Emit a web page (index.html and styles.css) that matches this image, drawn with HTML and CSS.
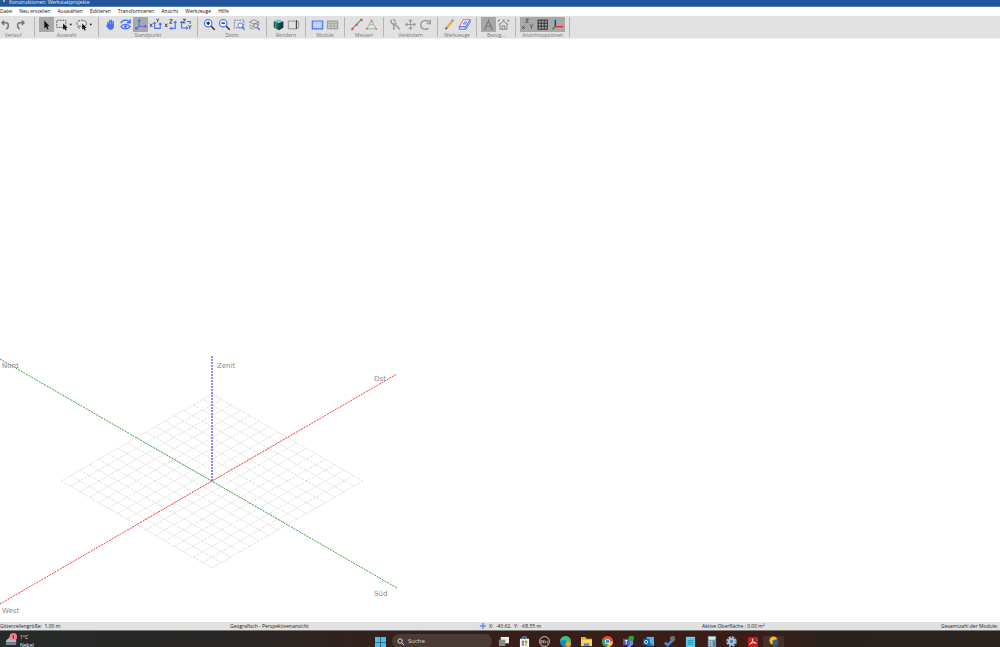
FILE: index.html
```
<!DOCTYPE html>
<html lang="de">
<head>
    <meta charset="UTF-8">
    <meta name="viewport" content="width=device-width, initial-scale=1.0">
    <title>Konstruktionen: Werkstattprojekte</title>
    <link rel="stylesheet" href="styles.css">
</head>
<body>
    <header class="titlebar">
        <span class="app-icon"></span>
        <span>Konstruktionen: Werkstattprojekte</span>
    </header>

    <nav class="menu">
        <a href="#">Datei</a>
        <a href="#">Neu erstellen</a>
        <a href="#">Auswählen</a>
        <a href="#">Editieren</a>
        <a href="#">Transformieren</a>
        <a href="#">Ansicht</a>
        <a href="#">Werkzeuge</a>
        <a href="#">Hilfe</a>
    </nav>

    <!-- Toolbar -->
    <div class="toolbar">
        <div class="group first">
            <div class="tools">
                <button aria-label="Rückgängig"><svg viewBox="0 0 15 15"><path d="M6 3 3.500 5.500 6 8M4 5.500H8C11.500 5.500 12 10 8.500 13" stroke="#777" stroke-width="1.800"/></svg></button>
                <button aria-label="Wiederholen"><svg viewBox="0 0 15 15"><path d="M9 3 11.500 5.500 9 8M11 5.500H7C3.500 5.500 3 10 6.500 13" stroke="#777" stroke-width="1.800"/></svg></button>
            </div>
            <span class="label">Verlauf</span>
        </div>
        <div class="group">
            <div class="tools">
                <button class="active" aria-label="Auswahl"><svg viewBox="0 0 15 15"><path d="M5 3V12L7 10.200 8.500 13.300 9.900 12.600 8.500 9.600H11Z" fill="#111"/></svg></button>
                <button class="wide" aria-label="Rechteckauswahl"><svg viewBox="0 0 20 15"><path d="M2 2.500H12V10.500H2Z" stroke="#555" stroke-dasharray="2 1"/><path d="M9 6V13L10.500 11.700 11.500 14 13 13.300 12 11H14Z" fill="#111"/><path d="M16 6.500H19L17.500 8.500Z" fill="#222"/></svg></button>
                <button class="wide" aria-label="Lassoauswahl"><svg viewBox="0 0 20 15"><ellipse cx="7.500" cy="6" rx="5.500" ry="3.500" stroke="#555" stroke-dasharray="3 1"/><path d="M3 9 5 12" stroke="#555"/><path d="M8 6V13L9.500 11.700 10.500 14 12 13.300 11 11H13Z" fill="#111"/><path d="M16 6.500H19L17.500 8.500Z" fill="#222"/></svg></button>
            </div>
            <span class="label">Auswahl</span>
        </div>
        <div class="group">
            <div class="tools">
                <button aria-label="Verschieben der Ansicht"><svg viewBox="0 0 15 15"><path d="M4.500 8V5M6.500 7V3M8.500 7V2.500M10.500 8V4" stroke="#4770f5" stroke-width="1.600" stroke-linecap="round"/><path d="M3.700 7H11.300V11L9.500 13.500H6L2.500 9.500Z" fill="#4770f5"/></svg></button>
                <button aria-label="Drehen der Ansicht"><svg viewBox="0 0 15 15"><path d="M2 6C4 1.500 10 1.500 12.500 5M13 1.500V5.500H9" stroke="#4770f5" stroke-width="1.500"/><path d="M2 10C5 6.500 10 6.500 13 10C10 13.500 5 13.500 2 10" stroke="#4770f5" stroke-width="1.500"/><circle cx="7.500" cy="10" r="1.600" fill="#4770f5"/></svg></button>
                <button class="active" aria-label="Perspektive"><svg viewBox="0 0 15 15"><path d="M6 2V9L2 12.500M6 9.500H14M4.500 3.500 6 2 7.500 3.500M12.500 8 14 9.500 12.500 11M2 10.500V12.500H4.500" stroke="#4770f5" stroke-width="1.300"/></svg></button>
                <button aria-label="XY-Ansicht"><svg viewBox="0 0 15 15"><path d="M6.500 5V12H13V6M5 6.500 6.500 5 8 6.500M11.500 7.500 13 6 14.500 7.500" stroke="#4770f5" stroke-width="1.300"/><path d="M1 6.500 4 10.500M4 6.500 1 10.500M8.500 1 10 3 11.500 1M10 3V5" stroke="#333"/></svg></button>
                <button aria-label="XZ-Ansicht"><svg viewBox="0 0 15 15"><path d="M7 12H13V4M11.500 5.500 13 4 14.500 5.500M8.500 10.500 7 12 8.500 13.500" stroke="#4770f5" stroke-width="1.300"/><path d="M1 6.500 4 10.500M4 6.500 1 10.500M6.500 2H9.500L6.500 6H9.500" stroke="#333"/></svg></button>
                <button aria-label="ZY-Ansicht"><svg viewBox="0 0 15 15"><path d="M3 4V11.500H10M1.500 5.500 3 4 4.500 5.500M8.500 10 10 11.500 8.500 13M9 4H13V7" stroke="#4770f5" stroke-width="1.300"/><path d="M4.500 1.500H7.500L4.500 5.500H7.500M11 8.500 12.500 10.500 14 8.500M12.500 10.500V13" stroke="#333"/></svg></button>
            </div>
            <span class="label">Standpunkt</span>
        </div>
        <div class="group">
            <div class="tools">
                <button aria-label="Vergrößern"><svg viewBox="0 0 15 15"><circle cx="6" cy="6" r="4.300" stroke="#4770f5" fill="#edf1ff" stroke-width="1.300"/><path d="M4 6H8M6 4V8M9.500 9.500 13.500 13.500" stroke="#222" stroke-width="1.500"/></svg></button>
                <button aria-label="Verkleinern"><svg viewBox="0 0 15 15"><circle cx="6" cy="6" r="4.300" stroke="#4770f5" fill="#edf1ff" stroke-width="1.300"/><path d="M4 6H8M9.500 9.500 13.500 13.500" stroke="#222" stroke-width="1.500"/></svg></button>
                <button aria-label="Bereich zoomen"><svg viewBox="0 0 15 15"><path d="M1.500 2.500H12.500V11.500H1.500Z" stroke="#777" stroke-dasharray="2 1"/><circle cx="8.500" cy="8.500" r="2.800" stroke="#4770f5" fill="#edf1ff"/><path d="M10.500 10.500 13.500 13.500" stroke="#4770f5" stroke-width="1.500"/></svg></button>
                <button aria-label="Objekt zoomen"><svg viewBox="0 0 15 15"><path d="M1.500 4.500 7 2 12.500 4.500V8M1.500 4.500 7 7 12.500 4.500M1.500 8 6 10M1.500 11 6 13" stroke="#888"/><circle cx="9" cy="9" r="2.500" stroke="#666" fill="#e1e1e1"/><path d="M11 11 13.500 13.500" stroke="#4770f5" stroke-width="1.500"/></svg></button>
            </div>
            <span class="label">Zoom</span>
        </div>
        <div class="group">
            <div class="tools">
                <button aria-label="Schattiert"><svg viewBox="0 0 15 15"><path d="M2 4 7 2 13 4V11L8 14 2 11Z" fill="#175d58"/><path d="M2 4 7 2 13 4 8 6Z" fill="#79c9b9"/><path d="M8 6 13 4V11L8 14Z" fill="#163c3d"/><path d="M4.500 5.500V11.500" stroke="#75bdb0"/></svg></button>
                <button aria-label="Drahtgitter"><svg viewBox="0 0 15 15"><path d="M1.500 3.500H10.500V12.500H1.500ZM10.500 3.500 13.500 4.500V11.500L10.500 12.500" stroke="#888"/><path d="M11 2.500V12.500" stroke="#333"/></svg></button>
            </div>
            <span class="label">Rendern</span>
        </div>
        <div class="group">
            <div class="tools">
                <button aria-label="Modulfläche"><svg viewBox="0 0 15 15"><path d="M1.500 3.500H13.500V12.500H1.500Z" stroke="#4770f5" stroke-width="1.300" fill="#bac9fa"/><path d="M5 4V12M7.500 4V12M10 4V12M2 8H13" stroke="#e2e9ff" stroke-width=".5"/></svg></button>
                <button aria-label="Modulreihen"><svg viewBox="0 0 15 15"><path d="M1.500 3.500H13.500V12.500H1.500Z" stroke="#888" fill="#ccc"/><path d="M5.500 3.500V12.500M9.500 3.500V12.500M2 6.500H13M2 9.500H13" stroke="#a5a5a5"/></svg></button>
            </div>
            <span class="label">Module</span>
        </div>
        <div class="group">
            <div class="tools">
                <button aria-label="Abstand messen"><svg viewBox="0 0 15 15"><path d="M3 12 13 2" stroke="#4aad58" stroke-width="1.500"/><path d="M1.500 11.500H4V14H1.500ZM6.500 6.500H9V9H6.500ZM12 1H14.500V3.500H12Z" fill="#e54b4b"/></svg></button>
                <button aria-label="Winkel messen"><svg viewBox="0 0 15 15"><path d="M2 12.500 7.500 3M7.500 3 13 12.500" stroke="#999"/><path d="M3 12.500H12M5 7C7 8 8.500 8 10 7" stroke="#8fb894"/><path d="M1 11.500H3V13.500H1ZM6.500 2H8.500V4H6.500ZM12 11.500H14V13.500H12Z" fill="#dc7777"/></svg></button>
            </div>
            <span class="label">Messen</span>
        </div>
        <div class="group">
            <div class="tools">
                <button aria-label="Bearbeiten"><svg viewBox="0 0 15 15"><path d="M2.500 2V5L5.500 7.500 8.500 5.500M5.500 7V13.500M6.500 7 12.500 13M5 1.500 7.500 4" stroke="#999" stroke-width="1.700"/></svg></button>
                <button aria-label="Verschieben"><svg viewBox="0 0 15 15"><path d="M7.500 2V13M2 7.500H13M5.500 4 7.500 2 9.500 4M5.500 11 7.500 13 9.500 11M4 5.500 2 7.500 4 9.500M11 5.500 13 7.500 11 9.500" stroke="#999" stroke-width="1.200"/></svg></button>
                <button aria-label="Drehen"><svg viewBox="0 0 15 15"><path d="M12 5C9 1 2 3 2 8C2 13 8 14 11 12M13 2V6.500H8.500" stroke="#999" stroke-width="1.600"/></svg></button>
            </div>
            <span class="label">Verändern</span>
        </div>
        <div class="group">
            <div class="tools">
                <button aria-label="Stift"><svg viewBox="0 0 15 15"><path d="M4 12 11 3" stroke="#e8a735" stroke-width="2.400"/><path d="M2.500 13.500 3 10.500 5.500 12.200Z" fill="#555"/><path d="M10.500 3.500 11.800 2" stroke="#b88d5d" stroke-width="2.400"/></svg></button>
                <button aria-label="Radierer"><svg viewBox="0 0 15 15"><path d="M6 2H14L9 10H1.500Z" fill="#f9eded" stroke="#e05566"/><path d="M1.500 10H9V13H1.500ZM9 10 14 2V5L9 13" fill="#cdd7fc" stroke="#4770f5"/><path d="M6 7 8 4.500H10L8.500 7Z" stroke="#4770f5"/></svg></button>
            </div>
            <span class="label">Werkzeuge</span>
        </div>
        <div class="group">
            <div class="tools">
                <button class="active" aria-label="Geografisch"><svg viewBox="0 0 15 15"><path d="M7.500 1V5M3.500 12.500 6.500 5H8.500L11.500 12.500M5 9.500H10M2 13H5M10 13H13" stroke="#777" stroke-width="1.300"/></svg></button>
                <button aria-label="Gebäude"><svg viewBox="0 0 15 15"><path d="M2 7.500 7.500 4 13 7.500M3.500 7V13H11.500V7M6 12.500V9H9V12.500M1.500 4.500V2.500H3.500M11.500 2.500H13.500V4.500M6 2.500H9" stroke="#777"/></svg></button>
            </div>
            <span class="label">Bezug...</span>
        </div>
        <div class="group">
            <div class="tools">
                <button class="active" aria-label="Achsennamen"><svg viewBox="0 0 15 15"><path d="M5.500 1.500H8.500L5.500 5H8.500M1.500 9.500 4 12.500M4 9.500 1.500 12.500M10.500 7.500 12 9.500 13.500 7.500M12 9.500V12" stroke="#444"/></svg></button>
                <button class="active" aria-label="Raster"><svg viewBox="0 0 15 15"><path d="M2.500 2V13M6 2V13M9.500 2V13M13 2V13M2 2.500H13.500M2 6H13.500M2 9.500H13.500M2 13H13.500" stroke="#222"/></svg></button>
                <button class="active" aria-label="Achsen"><svg viewBox="0 0 15 15"><path d="M5 2V10" stroke="#2333ee" stroke-width="1.700"/><path d="M5 10H14" stroke="#f02828" stroke-width="1.700"/><path d="M5 10 1.500 13" stroke="#279b36" stroke-width="1.700"/></svg></button>
            </div>
            <span class="label">Ansichtsoptionen</span>
        </div>
    </div>

    <!-- 3D view -->
    <main class="view">
        <svg class="scene" viewBox="0 350 400 272">
            <g id="grid" stroke="#dcdcdc" stroke-width=".8" stroke-dasharray="3 1"></g>
            <g stroke-dasharray="2 1">
                <path d="M0 359 397 588" stroke="#3fa03f"/>
                <path d="M0 604 212 481 397 374" stroke="#ff3838"/>
                <path d="M212 356V481" stroke="#5050ff" stroke-width="1.300"/>
            </g>
            <text x="2" y="368">Nord</text>
            <text x="217" y="368">Zenit</text>
            <text x="374" y="381">Ost</text>
            <text x="374" y="596">Süd</text>
            <text x="2" y="613">West</text>
        </svg>
    </main>

    <footer class="status">
        <span>Gitterzellengröße: &nbsp;1.00 m</span>
        <span>Geografisch - Perspektivenansicht</span>
        <span class="position"><svg viewBox="0 0 8 8"><path d="M4 0V8M0 4H8" stroke="#6688f5" stroke-width="2"/></svg>X: &nbsp;-43.62, &nbsp;Y: &nbsp;-68.55 m</span>
        <span>Aktive Oberfläche : 0.00 m²</span>
        <span class="modules">Gesamtzahl der Module:</span>
    </footer>

    <!-- Taskbar -->
    <div class="taskbar">
        <div class="weather">
            <svg viewBox="0 0 14 14"><path d="M1 10C1 6 4 7 5 4C9 1 13 5 12 10Z" fill="#a9bac8"/><path d="M1 10H12V13H1Z" fill="#71869a"/><circle cx="9" cy="4" r="4" fill="#f47f8c"/><path d="M9 2V6" stroke="#48262b"/></svg>
            <div>1°C<br>Nebel</div>
        </div>
        <div class="apps">
            <button class="start" aria-label="Start"><svg viewBox="0 0 12 12"><path d="M0 0H5.700V5.700H0ZM6.300 0H12V5.700H6.300ZM0 6.300H5.700V12H0ZM6.300 6.300H12V12H6.300Z" fill="#42c0f5"/></svg></button>
            <label class="search">
                <svg viewBox="0 0 8 8"><circle cx="3.500" cy="3.500" r="2.500" stroke="#eee"/><path d="M5.500 5.500 8 8" stroke="#eee"/></svg>
                <input type="text" placeholder="Suche" aria-label="Suche">
            </label>
            <div class="icons">
                <button aria-label="Aktive Anwendungen"><svg viewBox="0 0 12 12"><path d="M3 1H12V8H3Z" fill="#eee"/><path d="M1 4H8V11H1Z" fill="#888"/></svg></button>
                <button aria-label="Store"><svg viewBox="0 0 12 12"><path d="M4 3V1H8V3" stroke="#5bb9ea"/><path d="M1 3H11V12H1Z" fill="#f2f2f2"/><path d="M3 5H5.500V7.500H3Z" fill="#e65335"/><path d="M6.500 5H9V7.500H6.500Z" fill="#65ac43"/><path d="M3 8H5.500V10.500H3Z" fill="#2699df"/><path d="M6.500 8H9V10.500H6.500Z" fill="#f0b92c"/></svg></button>
                <button aria-label="Dell"><svg viewBox="0 0 12 12"><circle cx="6" cy="6" r="5.300" stroke="#ddd"/><path d="M2 7.500V5H3.500V7.500ZM6 5H4.500V7.500H6M4.500 6H6M7 5V7.500H8M9 5V7.500H10" stroke="#ccc" stroke-width=".7"/></svg></button>
                <button aria-label="Edge"><svg viewBox="0 0 12 12"><circle cx="6" cy="6" r="6" fill="#1687d1"/><path d="M0 6C1-2 12-1 12 6C12 9 8 9 7 8C8 4 4 3 0 6" fill="#43bd78"/><circle cx="9" cy="9" r="3" fill="#e4a32a"/></svg></button>
                <button aria-label="Explorer"><svg viewBox="0 0 12 12"><path d="M0 1H5L6 3H12V11H0Z" fill="#e8ae25"/><path d="M0 4H12V11H0Z" fill="#ffd55b"/><path d="M3 8H9V11H3Z" fill="#3d8dd7"/></svg></button>
                <button aria-label="Chrome"><svg viewBox="0 0 12 12"><circle cx="6" cy="6" r="6" fill="#e64c3c"/><path d="M6 6 .8 3A6 6 0 0 0 6 12Z" fill="#39a65b"/><path d="M6 6H12A6 6 0 0 1 6 12Z" fill="#f5c42c"/><circle cx="6" cy="6" r="2.800" fill="#fff"/><circle cx="6" cy="6" r="2.100" fill="#428be6"/></svg></button>
                <button aria-label="Teams"><svg viewBox="0 0 12 12"><path d="M5 4H11V9L8 12H5Z" fill="#7b83eb"/><path d="M0 3H7V10H0Z" fill="#4f56bb"/><path d="M2 5H5M3.500 5V9" stroke="#fff"/><circle cx="9" cy="2.500" r="3" fill="#22a62b"/></svg></button>
                <button aria-label="Outlook"><svg viewBox="0 0 12 12"><path d="M4 1H12V11H4Z" fill="#46b7ed"/><path d="M6 6 12 11H4Z" fill="#1679ca"/><path d="M0 3H7V10H0Z" fill="#075baf"/><circle cx="3.500" cy="6.500" r="1.700" stroke="#fff"/></svg></button>
                <button aria-label="To Do"><svg viewBox="0 0 12 12"><path d="M1 7 4 10 10 4" stroke="#3f83df" stroke-width="3"/><circle cx="9.500" cy="3" r="3" fill="#71706f"/></svg></button>
                <button aria-label="Editor"><svg viewBox="0 0 12 12"><path d="M1 1H11V12H1Z" fill="#55c7e8"/><path d="M1 1.500H11" stroke="#bbb"/><path d="M3 5H9M3 7H9M3 9H9" stroke="#278eaf"/></svg></button>
                <button aria-label="Rechner"><svg viewBox="0 0 12 12"><path d="M2 0H11V12H2Z" fill="#8296a5"/><path d="M3 1H10V4H3Z" fill="#d9edf8"/><path d="M3 6H7M3 8H7M3 10H7" stroke="#ddd" stroke-dasharray="1.500 1"/><path d="M8 6H10V11H8Z" fill="#2986d1"/></svg></button>
                <button aria-label="Einstellungen"><svg viewBox="0 0 12 12"><circle cx="6" cy="6" r="4.500" stroke="#9eb7cc" stroke-width="2.500" stroke-dasharray="2.500 1"/><circle cx="6" cy="6" r="3.800" fill="#b7c6d2"/><circle cx="6" cy="6" r="1.800" fill="#2986d1"/></svg></button>
                <button aria-label="Acrobat"><svg viewBox="0 0 12 12"><rect x="1" y="1" width="11" height="11" rx="1" fill="#c51d1d"/><path d="M3 9C5 8 7 4 6 3C5 4 7 8 10 8C8 6 5 8 3 9" stroke="#fff" stroke-width=".8"/></svg></button>
                <button class="current" aria-label="Konstruktion"><svg viewBox="0 0 12 12"><circle cx="6" cy="5" r="4.500" fill="#f5bd25"/><path d="M5 5 11 3V10L7 12 5 9Z" fill="#315d88"/></svg></button>
            </div>
        </div>
    </div>

    <script>
        // Ground grid, 16 x 16 cells around the origin
        const grid = document.getElementById('grid');
        const cells = 16;
        let lines = '';
        for (let i = 0; i <= cells; i++) {
            const dx = 151 * i / cells;
            const dy = 87 * i / cells;
            lines += `M${61 + dx} ${481 - dy}L${212 + dx} ${568 - dy}`;
            lines += `M${61 + dx} ${481 + dy}L${212 + dx} ${394 + dy}`;
        }
        grid.innerHTML = `<path d="${lines}"/>`;
    </script>
</body>
</html>
```
FILE: styles.css
```
* {
    box-sizing: border-box;
}

body {
    display: flex;
    flex-direction: column;
    height: 100vh;
    margin: 0;
    overflow: hidden;
    background-color: #fff;
    color: #222;
    font-family: "Open Sans", "Noto Sans", sans-serif;
    font-size: 5px;
    line-height: 8px;
}

svg {
    display: block;
    fill: none;
}

button {
    padding: 0;
    border: none;
    background: none;
}

.titlebar {
    display: flex;
    flex: none;
    align-items: flex-start;
    gap: 4px;
    height: 7px;
    padding: 0 3px;
    background-color: #23559b;
    border-bottom: 1px solid #5b7fb4;
    color: #e5ecf5;
    line-height: 4px;
}

.app-icon {
    width: 2px;
    height: 2px;
    background-color: #d6aa50;
}

.menu {
    display: flex;
    flex: none;
    gap: 7px;
    height: 9px;
    line-height: 9px;
}

.menu a {
    color: #111;
    text-decoration: none;
}

/* Toolbar */
.toolbar {
    display: flex;
    flex: none;
    height: 23px;
    padding: 1px 0;
    background-color: #e1e1e1;
    border-bottom: 1px solid #f0f0f0;
}

.group {
    padding: 0 4px;
    border-right: 1px solid #b5b5b5;
    text-align: center;
}

.group.first {
    padding: 0 6px 0 0;
    margin-left: -2px;
}

.tools {
    display: flex;
}

.tools button {
    width: 15px;
    height: 15px;
    padding: 1px;
}

.tools button.wide {
    width: 20px;
}

.tools .active {
    background-color: #a8a8a8;
}

.label {
    display: block;
    color: #777;
    line-height: 7px;
}

/* 3D view */
.view {
    display: flex;
    flex: 1;
    align-items: flex-end;
    min-height: 0;
}

.scene {
    flex: none;
    width: 400px;
    height: 272px;
}

.scene text {
    fill: #888;
    font-family: "DejaVu Sans", sans-serif;
    font-size: 7px;
}

.status {
    display: grid;
    flex: none;
    grid-template-columns: 230fr 250fr 222fr 150fr 148fr;
    height: 8px;
    background-color: #e1e1e1;
}

.position {
    display: flex;
    align-items: center;
    gap: 3px;
}

.position svg {
    width: 6px;
    height: 6px;
}

.modules {
    padding-right: 2px;
    text-align: right;
}

/* Taskbar */
.taskbar {
    display: grid;
    flex: none;
    grid-template-columns: 375fr 625fr;
    height: 17px;
    overflow: hidden;
    background: linear-gradient(to right, #262a29 0%, #292623 25%, #33211c 38%, #3a1d17 60%, #3a1d17 77%, #28231e 83%, #2b241e 100%);
    border-top: 1px solid #777;
}

.weather {
    display: flex;
    gap: 2px;
    padding: 2px 0 0 5px;
    color: #eee;
}

.weather svg {
    width: 13px;
    height: 13px;
}

.apps {
    display: flex;
    gap: 6px;
    padding-top: 5px;
}

.apps svg {
    width: 11px;
    height: 11px;
}

.search {
    display: flex;
    align-items: center;
    gap: 4px;
    width: 100px;
    height: 14px;
    margin-top: -2px;
    padding: 0 5px;
    background-color: #4b3b37;
    border-radius: 7px;
}

.search svg {
    width: 7px;
    height: 7px;
}

.search input {
    width: 60px;
    padding: 0;
    border: none;
    outline: none;
    background: none;
    color: #ddd;
    font: inherit;
    font-size: 6px;
}

.search input::placeholder {
    color: #ddd;
}

.icons {
    display: flex;
    width: 291px;
    margin-left: -5px;
}

.icons button {
    display: flex;
    flex: 1;
    justify-content: center;
}

.icons .current {
    background-color: #46302a;
}
```
